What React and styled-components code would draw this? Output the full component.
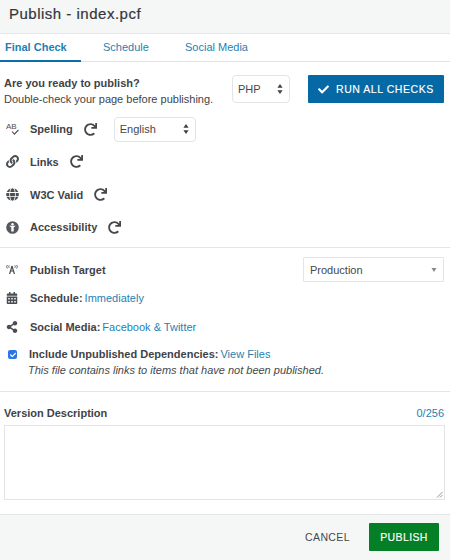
import React from "react";
import styled, { createGlobalStyle } from "styled-components";
import { FaCalendarAlt, FaCheck, FaGlobe, FaLink, FaRedo, FaShareAlt } from "react-icons/fa";

const GlobalStyle = createGlobalStyle`
  html, body {
    margin: 0;
    padding: 0;
    background: #fff;
  }
  body {
    font-family: "Liberation Sans", Arial, sans-serif;
    color: #3f4347;
  }
  * {
    box-sizing: border-box;
  }
`;

const Dialog = styled.div`
  width: 450px;
  height: 560px;
  display: flex;
  flex-direction: column;
  overflow: hidden;
`;

const Header = styled.header`
  height: 34px;
  flex: none;
  display: flex;
  align-items: center;
  padding: 0 0 7px 9px;
  background: #f5f6f6;
  border-bottom: 1px solid #e6e7e8;
`;

const Title = styled.h1`
  margin: 0;
  font-size: 15px;
  font-weight: 400;
  letter-spacing: 0.5px;
  color: #33373b;
  -webkit-text-stroke: 0.2px #33373b;
`;

const Tabs = styled.nav`
  height: 28px;
  flex: none;
  display: flex;
  border-bottom: 1px solid #dfe3e6;
`;

const Tab = styled.a`
  height: 28px;
  width: ${(p) => p.$width}px;
  padding: 7px 0 0 ${(p) => p.$indent}px;
  font-size: 11px;
  color: #1f7fb5;
  font-weight: ${(p) => (p.$active ? 700 : 400)};
  border-bottom: ${(p) => (p.$active ? "2px solid #0b6ea8" : "none")};
`;

const Section = styled.section`
  flex: none;
  height: ${(p) => p.$height}px;
  padding-top: ${(p) => p.$top}px;
  border-bottom: 1px solid #e4e5e6;
`;

const IntroRow = styled.div`
  display: flex;
  align-items: flex-start;
  height: 28px;
  margin-bottom: 10px;
  padding-left: 4px;
`;

const Intro = styled.div`
  width: 228px;
  flex: none;
  font-size: 11px;
  line-height: 16px;
`;

const Strong = styled.strong`
  display: block;
  font-weight: 700;
`;

const Select = styled.div`
  position: relative;
  width: ${(p) => p.$width}px;
  height: ${(p) => p.$height}px;
  flex: none;
  display: flex;
  align-items: center;
  padding-left: ${(p) => (p.$square ? 6 : 5)}px;
  font-size: 11px;
  color: #44484c;
  background: #fff;
  border: 1px solid #e3e4e5;
  border-radius: ${(p) => (p.$square ? 1 : 4)}px;
`;

const Stepper = styled.svg`
  position: absolute;
  right: 6px;
  top: 50%;
  transform: translateY(-50%);
`;

const RunButton = styled.button`
  width: 136px;
  height: 28px;
  margin-left: 18px;
  flex: none;
  display: flex;
  align-items: center;
  gap: 7px;
  padding: 0 0 0 10px;
  border: 0;
  border-radius: 1px;
  background: #0569a5;
  color: #fff;
  font: 400 10.5px "Liberation Sans", Arial, sans-serif;
  letter-spacing: 0.55px;
  -webkit-text-stroke: 0.15px #fff;
`;

const CheckRow = styled.div`
  height: ${(p) => p.$height || 32.67}px;
  display: flex;
  align-items: center;
  font-size: 11px;
`;

const TargetRow = styled(CheckRow)`
  padding-right: 6px;
`;

const IconSlot = styled.span`
  width: 30px;
  flex: none;
  display: flex;
  justify-content: center;
  color: #4a4e52;
  padding-right: 6px;
`;

const Label = styled.span`
  font-weight: 700;
  color: #3f4347;
`;

const Refresh = styled(FaRedo)`
  margin-left: 11px;
  width: 13px;
  height: 13px;
  color: #44484c;
`;

const SpellSelect = styled(Select)`
  margin-left: 17px;
`;

const Spacer = styled.span`
  flex: 1;
`;

const Link = styled.a`
  color: #1f7fb5;
  margin-left: 2px;
`;

const DependencyRow = styled.div`
  display: flex;
  align-items: flex-start;
  margin-top: 5px;
  font-size: 11px;
  line-height: 16px;
`;

const Checkbox = styled.span`
  width: 9px;
  height: 9px;
  margin: 4px 0 0 8px;
  flex: none;
  display: flex;
  align-items: center;
  justify-content: center;
  border-radius: 2px;
  background: #2a76e8;
  color: #fff;
`;

const DependencyText = styled.div`
  margin-left: 12px;
`;

const Note = styled.em`
  display: block;
  color: #44484c;
  margin-left: -1px;
`;

const VersionBlock = styled.div`
  padding: 0 5px 0 4px;
`;

const LabelRow = styled.div`
  display: flex;
  justify-content: space-between;
  font-size: 11px;
  line-height: 13px;
  margin-bottom: 5px;
`;

const Counter = styled.span`
  color: #1f7fb5;
  margin-right: 1px;
`;

const TextArea = styled.div`
  position: relative;
  width: 441px;
  height: 75px;
  border: 1px solid #e3e4e5;
  background: #fff;
`;

const Grip = styled.svg`
  position: absolute;
  right: 1px;
  bottom: 1px;
`;

const Footer = styled.footer`
  flex: 1;
  display: flex;
  align-items: center;
  justify-content: flex-end;
  gap: 19px;
  padding: 0 11px 2px 0;
  background: #f5f6f6;
`;

const TextButton = styled.button`
  border: 0;
  padding: 0;
  background: none;
  color: #44484c;
  font: 400 10.5px "Liberation Sans", Arial, sans-serif;
  letter-spacing: 0.4px;
`;

const PublishButton = styled.button`
  width: 70px;
  height: 28px;
  border: 0;
  border-radius: 1px;
  background: #057f25;
  color: #fff;
  font: 400 10.5px "Liberation Sans", Arial, sans-serif;
  letter-spacing: 0.4px;
  -webkit-text-stroke: 0.15px #fff;
`;

const SvgLabel = styled.text`
  font-family: "Liberation Sans", Arial, sans-serif;
  font-size: 8px;
  fill: #4a4e52;
`;

const StepperIcon = () => (
  <Stepper width="6" height="10" viewBox="0 0 6 10">
    <path d="M3 0 L5.6 3.8 H.4 Z M3 10 L5.6 6.2 H.4 Z" fill="#3f4347" />
  </Stepper>
);

const SpellIcon = () => (
  <svg width="13" height="14" viewBox="0 0 13 14">
    <SvgLabel x="0" y="7">AB</SvgLabel>
    <path d="M6 9.5 L8.4 12.2 L12.4 8" fill="none" stroke="#4a4e52" strokeWidth="1.1" />
  </svg>
);

const AccessIcon = () => (
  <svg width="13" height="13" viewBox="0 0 13 13">
    <circle cx="6.5" cy="6.5" r="6.3" fill="#55595d" />
    <circle cx="6.5" cy="3.2" r="1.2" fill="#fff" />
    <path d="M3.2 4.8 H9.8 L7.7 6.6 V10.6 H5.3 V6.6 Z" fill="#fff" />
  </svg>
);

const TargetIcon = () => (
  <svg width="14" height="11" viewBox="0 0 14 11">
    <path
      d="M7 2 L4.6 10 M7 2 L9.4 10 M5.5 7 H8.5"
      fill="none"
      stroke="#4a4e52"
      strokeWidth="1.2"
    />
    <path
      d="M2.4 1 Q.8 2.6 2.4 4.4 M4.2 1.4 Q3.2 2.6 4.2 3.8 M11.6 1 Q13.2 2.6 11.6 4.4 M9.8 1.4 Q10.8 2.6 9.8 3.8"
      fill="none"
      stroke="#4a4e52"
      strokeWidth="0.9"
    />
  </svg>
);

const checks = [
  { label: "Links", icon: <FaLink size={13} /> },
  { label: "W3C Valid", icon: <FaGlobe size={13} /> },
  { label: "Accessibility", icon: <AccessIcon /> },
];

export default function App() {
  return (
    <>
      <GlobalStyle />
      <Dialog>
        <Header>
          <Title>Publish - index.pcf</Title>
        </Header>
        <Tabs>
          <Tab $active $width={81} $indent={5}>Final Check</Tab>
          <Tab $width={104} $indent={22}>Schedule</Tab>
          <Tab $width={100} $indent={0}>Social Media</Tab>
        </Tabs>

        <Section $height={186} $top={13}>
          <IntroRow>
            <Intro>
              <Strong>Are you ready to publish?</Strong>
              Double-check your page before publishing.
            </Intro>
            <Select $width={58} $height={28}>
              PHP
              <StepperIcon />
            </Select>
            <RunButton>
              <FaCheck size={11} />
              RUN ALL CHECKS
            </RunButton>
          </IntroRow>
          <CheckRow>
            <IconSlot><SpellIcon /></IconSlot>
            <Label>Spelling</Label>
            <Refresh />
            <SpellSelect $width={82} $height={25}>
              English
              <StepperIcon />
            </SpellSelect>
          </CheckRow>
          {checks.map((check) => (
            <CheckRow key={check.label}>
              <IconSlot>{check.icon}</IconSlot>
              <Label>{check.label}</Label>
              <Refresh />
            </CheckRow>
          ))}
        </Section>

        <Section $height={144} $top={7}>
          <TargetRow $height={29}>
            <IconSlot><TargetIcon /></IconSlot>
            <Label>Publish Target</Label>
            <Spacer />
            <Select $width={141} $height={25} $square>
              Production
              <Stepper width="6" height="4" viewBox="0 0 6 4">
                <path d="M.5 0 H5.5 L3 4 Z" fill="#888" />
              </Stepper>
            </Select>
          </TargetRow>
          <CheckRow $height={28}>
            <IconSlot><FaCalendarAlt size={12} /></IconSlot>
            <Label>Schedule:</Label>
            <Link>Immediately</Link>
          </CheckRow>
          <CheckRow $height={29}>
            <IconSlot><FaShareAlt size={12} /></IconSlot>
            <Label>Social Media:</Label>
            <Link>Facebook &amp; Twitter</Link>
          </CheckRow>
          <DependencyRow>
            <Checkbox><FaCheck size={6} /></Checkbox>
            <DependencyText>
              <Label>Include Unpublished Dependencies:</Label>
              <Link>View Files</Link>
              <Note>This file contains links to items that have not been published.</Note>
            </DependencyText>
          </DependencyRow>
        </Section>

        <Section $height={123} $top={15}>
          <VersionBlock>
            <LabelRow>
              <Label>Version Description</Label>
              <Counter>0/256</Counter>
            </LabelRow>
            <TextArea>
              <Grip width="7" height="7" viewBox="0 0 7 7">
                <path d="M1 6.5 L6.5 1 M4 6.5 L6.5 4" stroke="#777" strokeWidth="0.8" />
              </Grip>
            </TextArea>
          </VersionBlock>
        </Section>

        <Footer>
          <TextButton>CANCEL</TextButton>
          <PublishButton>PUBLISH</PublishButton>
        </Footer>
      </Dialog>
    </>
  );
}
